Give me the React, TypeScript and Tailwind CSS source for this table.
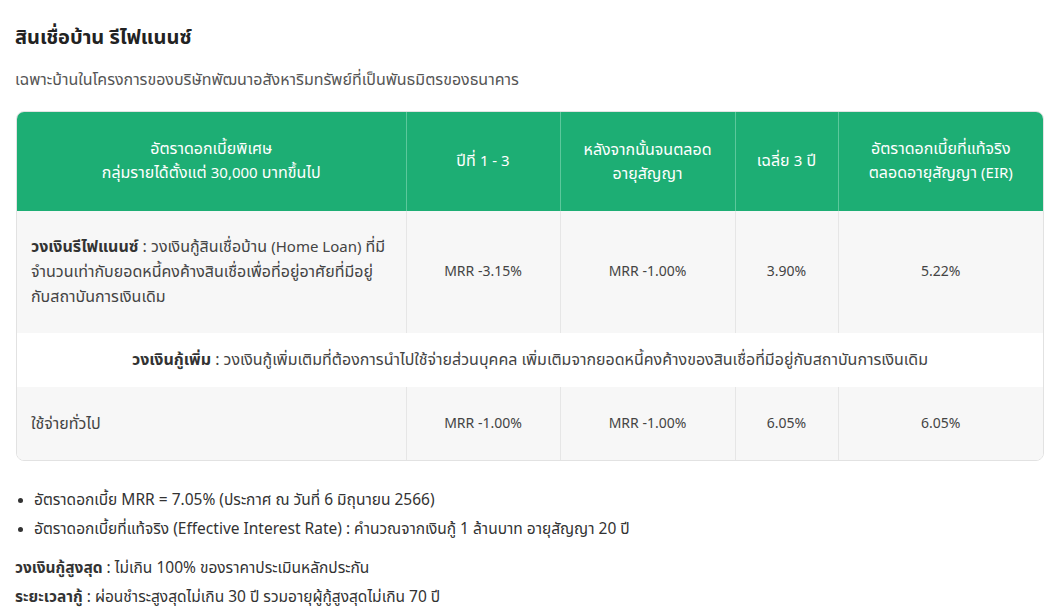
import React from "react";

const font = { fontFamily: '"Noto Sans Thai", "Noto Sans", "Liberation Sans", sans-serif' };

export default function App() {
  return (
    <div className="w-[1056px] h-[615px] bg-white overflow-hidden text-[#444]" style={font}>
      <div className="px-4 pt-[24px]">
        <h1 className="text-[20px] font-bold leading-[28px] text-[#222] -ml-px">สินเชื่อบ้าน รีไฟแนนซ์</h1>
        <p className="mt-[16px] text-[16px] leading-[24px] text-[#555] -ml-px">
          เฉพาะบ้านในโครงการของบริษัทพัฒนาอสังหาริมทรัพย์ที่เป็นพันธมิตรของธนาคาร
        </p>
        <div className="mt-[19px] w-[1028px] rounded-lg border border-[#e2e2e2] overflow-hidden">
          <table className="w-full border-collapse table-fixed text-[16px] leading-[24px]">
            <colgroup>
              <col className="w-[389px]" />
              <col className="w-[154px]" />
              <col className="w-[175px]" />
              <col className="w-[103px]" />
              <col />
            </colgroup>
            <thead>
              <tr className="bg-[#1dae74] text-white h-[99px]">
                <th className="font-normal text-center px-4 border-r border-[#5cc89c]">
                  อัตราดอกเบี้ยพิเศษ
                  <br />
                  กลุ่มรายได้ตั้งแต่ <span className="text-[15px]">30,000</span> บาทขึ้นไป
                </th>
                <th className="font-normal text-center px-3 border-r border-[#5cc89c]">
                  ปีที่ <span className="text-[15px]">1 - 3</span>
                </th>
                <th className="font-normal text-center px-3 border-r border-[#5cc89c]">
                  หลังจากนั้นจนตลอด
                  <br />
                  อายุสัญญา
                </th>
                <th className="font-normal text-center px-3 border-r border-[#5cc89c]">
                  เฉลี่ย <span className="text-[15px]">3</span> ปี
                </th>
                <th className="font-normal text-center px-3">
                  อัตราดอกเบี้ยที่แท้จริง
                  <br />
                  ตลอดอายุสัญญา <span className="text-[15px]">(EIR)</span>
                </th>
              </tr>
            </thead>
            <tbody>
              <tr className="bg-[#f7f7f7] h-[122px]">
                <td className="pl-[14px] pr-4 border-r border-[#e6e6e6] leading-[25px]">
                  <b className="font-bold text-[#333]">วงเงินรีไฟแนนซ์</b> : วงเงินกู้สินเชื่อบ้าน <span className="text-[15px]">(Home Loan)</span> ที่มี
                  จำนวนเท่ากับยอดหนี้คงค้างสินเชื่อเพื่อที่อยู่อาศัยที่มีอยู่กับสถาบันการเงินเดิม
                </td>
                <td className="text-center text-[14px] border-r border-[#e6e6e6]">MRR -3.15%</td>
                <td className="text-center text-[14px] border-r border-[#e6e6e6]">MRR -1.00%</td>
                <td className="text-center text-[14px] border-r border-[#e6e6e6]">3.90%</td>
                <td className="text-center text-[14px]">5.22%</td>
              </tr>
              <tr className="bg-white h-[54px]">
                <td colSpan={5} className="text-center">
                  <b className="font-bold text-[#333]">วงเงินกู้เพิ่ม</b> : วงเงินกู้เพิ่มเติมที่ต้องการนำไปใช้จ่ายส่วนบุคคล เพิ่มเติมจากยอดหนี้คงค้างของสินเชื่อที่มีอยู่กับสถาบันการเงินเดิม
                </td>
              </tr>
              <tr className="bg-[#f7f7f7] h-[73px]">
                <td className="pl-[14px] border-r border-[#e6e6e6]">ใช้จ่ายทั่วไป</td>
                <td className="text-center text-[14px] border-r border-[#e6e6e6]">MRR -1.00%</td>
                <td className="text-center text-[14px] border-r border-[#e6e6e6]">MRR -1.00%</td>
                <td className="text-center text-[14px] border-r border-[#e6e6e6]">6.05%</td>
                <td className="text-center text-[14px]">6.05%</td>
              </tr>
            </tbody>
          </table>
        </div>
        <ul className="mt-[25px] text-[15.5px] leading-[29px] text-[#333]">
          <li className="flex items-center">
            <span className="w-[5px] h-[5px] rounded-full bg-[#333] ml-[2px] mr-[11px]" />
            อัตราดอกเบี้ย MRR = 7.05% (ประกาศ ณ วันที่ 6 มิถุนายน 2566)
          </li>
          <li className="flex items-center">
            <span className="w-[5px] h-[5px] rounded-full bg-[#333] ml-[2px] mr-[11px]" />
            อัตราดอกเบี้ยที่แท้จริง (Effective Interest Rate) : คำนวณจากเงินกู้ 1 ล้านบาท อายุสัญญา 20 ปี
          </li>
        </ul>
        <div className="mt-[10px] text-[15.5px] leading-[29px] text-[#333] -ml-px">
          <p>
            <b className="font-bold">วงเงินกู้สูงสุด</b> : ไม่เกิน 100% ของราคาประเมินหลักประกัน
          </p>
          <p>
            <b className="font-bold">ระยะเวลากู้</b> : ผ่อนชำระสูงสุดไม่เกิน 30 ปี รวมอายุผู้กู้สูงสุดไม่เกิน 70 ปี
          </p>
        </div>
      </div>
    </div>
  );
}
